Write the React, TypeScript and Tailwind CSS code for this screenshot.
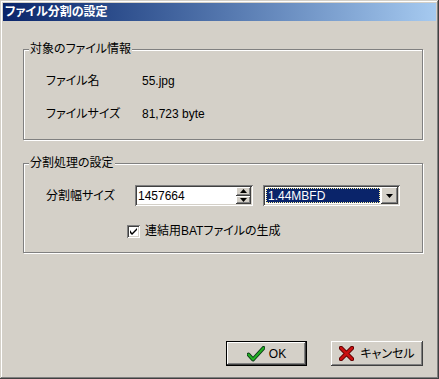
import React from "react";

const raised =
  "shadow-[inset_-1px_-1px_0_#404040,inset_1px_1px_0_#ffffff,inset_-2px_-2px_0_#808080,inset_2px_2px_0_#d4d0c8]";
const sunken =
  "shadow-[inset_1px_1px_0_#808080,inset_-1px_-1px_0_#ffffff,inset_2px_2px_0_#404040,inset_-2px_-2px_0_#d4d0c8]";
const etched =
  "border border-[#808080] shadow-[1px_1px_0_#ffffff,inset_1px_1px_0_#ffffff]";

type TGroupProps = {
  title: string;
  className: string;
  children: React.ReactNode;
};

const Group = ({ title, className, children }: TGroupProps) => {
  return (
    <div className={`relative w-[400px] ${etched} ${className}`}>
      <span className="absolute -top-[8px] left-[5px] bg-[#d4d0c8] px-[1px] leading-[14px]">
        {title}
      </span>
      {children}
    </div>
  );
};

const Triangle = ({ up }: { up?: boolean }) => (
  <svg width="7" height="4" viewBox="0 0 7 4">
    <path d={up ? "M3.5 0 L7 4 L0 4 Z" : "M0 0 L7 0 L3.5 4 Z"} fill="#000" />
  </svg>
);

const CheckIcon = () => (
  <svg width="18" height="16" viewBox="0 0 18 16">
    <path
      d="M1.5 8.5 L6 13.5 L16.5 2"
      fill="none"
      stroke="#0b3a18"
      strokeWidth="4"
      strokeLinecap="round"
      strokeLinejoin="round"
    />
    <path
      d="M1.5 8.5 L6 13.5 L16.5 2"
      fill="none"
      stroke="#22b022"
      strokeWidth="2"
      strokeLinecap="round"
      strokeLinejoin="round"
    />
  </svg>
);

const CrossIcon = () => (
  <svg width="15" height="15" viewBox="0 0 15 15">
    <path
      d="M2 2 L13 13 M13 2 L2 13"
      fill="none"
      stroke="#5a0000"
      strokeWidth="4.5"
      strokeLinecap="round"
    />
    <path
      d="M2 2 L13 13 M13 2 L2 13"
      fill="none"
      stroke="#c81010"
      strokeWidth="2.5"
      strokeLinecap="round"
    />
  </svg>
);

export default function App() {
  return (
    <div
      className="w-[439px] h-[379px] bg-[#d4d0c8] p-[3px] flex flex-col text-[12px] text-black shadow-[inset_-1px_-1px_0_#404040,inset_1px_1px_0_#d4d0c8,inset_-2px_-2px_0_#808080,inset_2px_2px_0_#ffffff] [font-family:'Liberation_Sans','Noto_Sans_CJK_JP',sans-serif] [font-feature-settings:'palt']"
    >
      <div className="h-[18px] flex items-center pl-[2px] bg-linear-to-r from-[#0a246a] to-[#a6caf0] text-white font-bold">
        ファイル分割の設定
      </div>

      <div className="flex-1 flex flex-col pl-[20px] pr-[13px]">
        <Group title="対象のファイル情報" className="mt-[28px] h-[91px] pt-[21px] pl-[22px]">
          <div className="flex flex-col gap-[13px]">
            <div className="flex items-center h-[20px]">
              <span className="w-[96px]">ファイル名</span>
              <span>55.jpg</span>
            </div>
            <div className="flex items-center h-[20px]">
              <span className="w-[96px]">ファイルサイズ</span>
              <span>81,723 byte</span>
            </div>
          </div>
        </Group>

        <Group title="分割処理の設定" className="mt-[23px] h-[90px] pt-[21px] pl-[22px]">
          <div className="flex items-center">
            <span className="w-[89px]">分割幅サイズ</span>
            <div className={`w-[118px] h-[21px] bg-white p-[2px] flex items-center ${sunken}`}>
              <span className="flex-1 pl-[1px]">1457664</span>
              <div className="flex flex-col w-[15px] h-[17px]">
                <div className={`flex-1 bg-[#d4d0c8] flex items-center justify-center ${raised}`}>
                  <Triangle up />
                </div>
                <div className={`flex-1 bg-[#d4d0c8] flex items-center justify-center ${raised}`}>
                  <Triangle />
                </div>
              </div>
            </div>
            <div className={`ml-[10px] w-[137px] h-[21px] bg-white p-[2px] flex ${sunken}`}>
              <div className="flex-1 m-[1px] bg-[#0a246a] text-white flex items-center pl-[2px] outline outline-1 outline-dotted outline-[#fff3a0] -outline-offset-1">
                1.44MBFD
              </div>
              <div className={`w-[17px] bg-[#d4d0c8] flex items-center justify-center ${raised}`}>
                <Triangle />
              </div>
            </div>
          </div>
          <div className="flex items-center mt-[16px] pl-[81px]">
            <div className={`w-[13px] h-[13px] bg-white flex items-center justify-center ${sunken}`}>
              <svg width="7" height="7" viewBox="0 0 7 7">
                <path d="M0 2 L0 5 L2 7 L7 2 L7 0 L2 5 Z" fill="#000" />
              </svg>
            </div>
            <span className="ml-[5px]">連結用BATファイルの生成</span>
          </div>
        </Group>

        <div className="mt-auto mb-[10px] flex justify-end gap-[24px]">
          <div className="w-[81px] h-[25px] border border-black">
            <div className={`w-full h-full bg-[#d4d0c8] flex items-center justify-center gap-[4px] ${raised}`}>
              <CheckIcon />
              <span>OK</span>
            </div>
          </div>
          <div
            className={`w-[92px] h-[25px] bg-[#d4d0c8] flex items-center justify-center gap-[6px] ${raised}`}
          >
            <CrossIcon />
            <span>キャンセル</span>
          </div>
        </div>
      </div>
    </div>
  );
}
